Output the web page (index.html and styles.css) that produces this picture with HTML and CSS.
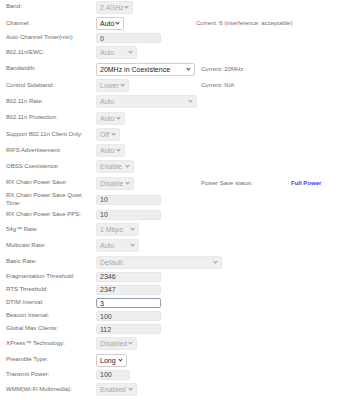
FILE: index.html
```html
<!DOCTYPE html>
<html>
<head>
<meta charset="utf-8">
<link rel="stylesheet" href="styles.css">
</head>
<body>
<form class="form">
  <div class="row"><label class="lbl">Band:</label><span class="sel w37"><select disabled><option>2.4GHz</option></select></span></div>
  <div class="row"><label class="lbl">Channel:</label><span class="sel on w28"><select><option>Auto</option></select></span><span class="note n0">Current: 6 (interference: acceptable)</span></div>
  <div class="row in"><label class="lbl">Auto Channel Timer(min)</label><input class="txt" value="0"></div>
  <div class="row"><label class="lbl">802.11n/EWC:</label><span class="sel w41"><select disabled><option>Auto</option></select></span></div>
  <div class="row"><label class="lbl">Bandwidth:</label><span class="sel on w99"><select><option>20MHz in Coexistence</option></select></span><span class="note">Current: 20MHz</span></div>
  <div class="row"><label class="lbl">Control Sideband:</label><span class="sel w33"><select disabled><option>Lower</option></select></span><span class="note">Current: N/A</span></div>
  <div class="row"><label class="lbl">802.11n Rate:</label><span class="sel w101"><select disabled><option>Auto</option></select></span></div>
  <div class="row"><label class="lbl">802.11n Protection:</label><span class="sel w29"><select disabled><option>Auto</option></select></span></div>
  <div class="row"><label class="lbl">Support 802.11n Client Only:</label><span class="sel w24"><select disabled><option>Off</option></select></span></div>
  <div class="row"><label class="lbl">RIFS Advertisement:</label><span class="sel w29"><select disabled><option>Auto</option></select></span></div>
  <div class="row"><label class="lbl">OBSS Coexistence:</label><span class="sel w38"><select disabled><option>Enable</option></select></span></div>
  <div class="row"><label class="lbl">RX Chain Power Save:</label><span class="sel w38"><select disabled><option>Disable</option></select></span><span class="note status"><span class="st-lbl">Power Save status:</span><b class="full">Full Power</b></span></div>
  <div class="row tall"><label class="lbl">RX Chain Power Save Quiet Time:</label><input class="txt" value="10"></div>
  <div class="row in"><label class="lbl">RX Chain Power Save PPS:</label><input class="txt" value="10"></div>
  <div class="row"><label class="lbl">54g™ Rate:</label><span class="sel w43"><select disabled><option>1 Mbps</option></select></span></div>
  <div class="row"><label class="lbl">Multicast Rate:</label><span class="sel w43"><select disabled><option>Auto</option></select></span></div>
  <div class="row"><label class="lbl">Basic Rate:</label><span class="sel w126"><select disabled><option>Default</option></select></span></div>
  <div class="row in"><label class="lbl">Fragmentation Threshold:</label><input class="txt" value="2346"></div>
  <div class="row in"><label class="lbl">RTS Threshold:</label><input class="txt" value="2347"></div>
  <div class="row in"><label class="lbl">DTIM Interval:</label><input class="txt active" value="3"></div>
  <div class="row in"><label class="lbl">Beacon Interval:</label><input class="txt" value="100"></div>
  <div class="row in"><label class="lbl">Global Max Clients:</label><input class="txt" value="112"></div>
  <div class="row"><label class="lbl">XPress™ Technology:</label><span class="sel w41"><select disabled><option>Disabled</option></select></span></div>
  <div class="row"><label class="lbl">Preamble Type:</label><span class="sel on w31"><select><option>Long</option></select></span></div>
  <div class="row in"><label class="lbl">Transmit Power:</label><input class="txt short" value="100"></div>
  <div class="row"><label class="lbl">WMM(Wi-Fi Multimedia):</label><span class="sel w41"><select disabled><option>Enabled</option></select></span></div>
</form>
</body>
</html>
```

FILE: styles.css
```css
html, body {
  margin: 0;
  padding: 0;
  background: #ffffff;
}
body {
  font-family: "Liberation Sans", Arial, sans-serif;
  color: #666666;
}
.form {
  margin-top: -1px;
  padding-left: 6px;
}
.row {
  display: grid;
  grid-template-columns: 90px 100px 1fr;
  align-items: center;
  height: 16.3px;
}
.row.in { height: 13.1px; }
.row.tall { height: 17px; }
.lbl {
  font-size: 6px;
  line-height: 7.6px;
  color: #6a6a6a;
  padding-right: 4px;
}
.sel {
  position: relative;
  display: block;
  height: 13px;
  justify-self: start;
}
.sel select {
  display: block;
  -webkit-appearance: none;
  appearance: none;
  box-sizing: border-box;
  width: 100%;
  height: 13px;
  margin: 0;
  padding: 0 0 0 3px;
  font-family: "Liberation Sans", Arial, sans-serif;
  font-size: 7px;
  line-height: 11px;
  border: 1px solid #e9e9e9;
  border-radius: 2px;
  background: #efefef;
  color: #a8a8a8;
  opacity: 1;
}
.sel.on select {
  background: #ffffff;
  border-color: #cfcfcf;
  color: #222222;
}
.sel::after {
  content: "";
  position: absolute;
  right: 5px;
  top: 4px;
  width: 2px;
  height: 2px;
  border-right: 1px solid #9a9a9a;
  border-bottom: 1px solid #9a9a9a;
  transform: rotate(45deg);
  pointer-events: none;
}
.sel.on::after {
  border-color: #444444;
}
.w24 { width: 24px; }
.w28 { width: 28px; }
.w29 { width: 29px; }
.w31 { width: 31px; }
.w33 { width: 33px; }
.w37 { width: 37px; }
.w38 { width: 38px; }
.w41 { width: 41px; }
.w43 { width: 43px; }
.w99 { width: 99px; }
.w101 { width: 101px; }
.w126 { width: 126px; }
.txt {
  display: block;
  box-sizing: border-box;
  width: 65px;
  height: 10px;
  margin: 0;
  padding: 0 3px;
  font-family: "Liberation Sans", Arial, sans-serif;
  font-size: 7px;
  color: #444444;
  background: #eeeeee;
  border: 1px solid #e6e6e6;
  border-radius: 2px;
  outline: none;
}
.txt.active {
  background: #ffffff;
  border-color: #8d9cb3;
  color: #222222;
}
.txt.short { width: 34px; }
.note {
  font-size: 6px;
  color: #6f6f6f;
  padding-left: 5px;
  white-space: nowrap;
}
.note.n0 { padding-left: 0; }
.status {
  display: flex;
}
.st-lbl {
  width: 90px;
}
.full {
  color: #3a3aff;
  font-weight: bold;
}
```
